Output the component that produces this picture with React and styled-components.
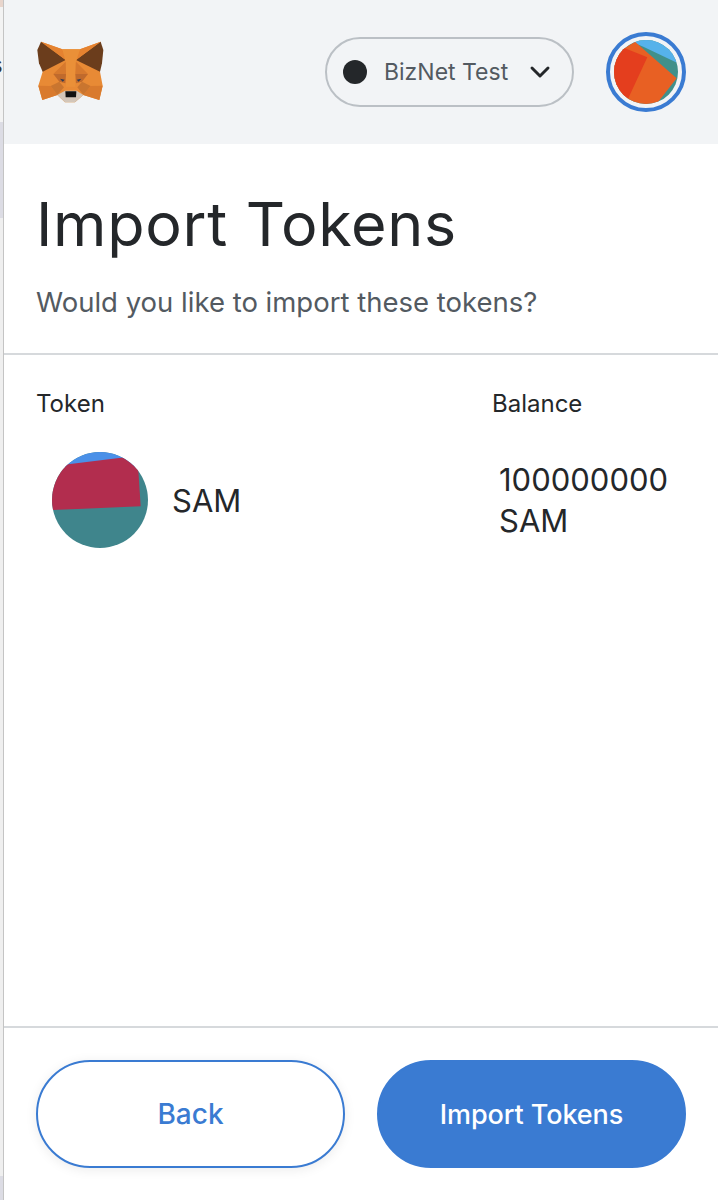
import styled, { createGlobalStyle } from 'styled-components';
import { ChevronDown } from 'lucide-react';

const GlobalStyle = createGlobalStyle`
  html,
  body {
    margin: 0;
    padding: 0;
    background: #fff;
    overflow: hidden;
  }

  * {
    box-sizing: border-box;
  }
`;

const StyledPage = styled.div`
  width: 718px;
  height: 1200px;

  display: flex;

  font-family: 'Inter', 'Liberation Sans', sans-serif;
  color: #24272a;
`;

const StyledSliver = styled.div`
  position: relative;
  flex: 0 0 4px;

  overflow: hidden;

  border-right: 1px solid #c4c4c4;
  background: linear-gradient(
    #e8d5cc 0 7px,
    #f3f3f3 7px 122px,
    #dcdce4 122px 218px,
    #efefef 218px 1176px,
    #dcdce4 1176px
  );
`;

const StyledStray = styled.span`
  position: absolute;
  top: 50px;
  left: -10px;

  font-size: 24px;
  color: #333;
`;

const StyledPopup = styled.main`
  flex: 1;
  min-width: 0;

  display: flex;
  flex-direction: column;
`;

const StyledHeader = styled.header`
  height: 144px;
  padding: 0 32px 0 33px;

  display: flex;
  align-items: center;

  background: #f2f4f6;
`;

const StyledFox = styled.svg`
  width: 67px;
  height: 62px;
  margin-right: auto;
`;

const StyledNetwork = styled.div`
  width: 249px;
  height: 70px;
  margin-right: 32px;
  padding: 0 16px 0 16px;

  display: flex;
  align-items: center;

  border: 2px solid #bbc0c5;
  border-radius: 35px;

  font-size: 23px;
  color: #535a61;
`;

const StyledDot = styled.span`
  flex: 0 0 24px;
  height: 24px;
  margin-right: 17px;

  border-radius: 50%;
  background: #24272a;
`;

const StyledNetworkName = styled.span`
  flex: 1;
  white-space: nowrap;
`;

const StyledAccount = styled.div`
  width: 80px;
  height: 80px;

  display: flex;
  align-items: center;
  justify-content: center;

  border: 4px solid #3a7bd2;
  border-radius: 50%;
`;

const StyledAvatar = styled.svg`
  width: ${(props) => props.$size}px;
  height: ${(props) => props.$size}px;
  flex-shrink: 0;

  border-radius: 50%;
`;

const StyledIntro = styled.section`
  height: 211px;
  padding: 44px 32px 0;

  border-bottom: 2px solid #d6d9dc;
`;

const StyledTitle = styled.h1`
  margin: 0;

  font-size: 61px;
  font-weight: 400;
  line-height: 72px;
  letter-spacing: 0.7px;
`;

const StyledSubtitle = styled.p`
  margin: 24px 0 0;

  font-size: 27.5px;
  line-height: 36px;
  color: #535a61;
`;

const StyledTable = styled.section`
  flex: 1;
  padding: 32px 32px 0;

  display: grid;
  grid-template-columns: 456px 1fr;
  grid-template-rows: 34px auto;
  row-gap: 31px;
  align-content: start;
`;

const StyledColumnLabel = styled.div`
  font-size: 24px;
  line-height: 34px;
`;

const StyledTokenCell = styled.div`
  padding-left: 16px;

  display: flex;
  align-items: center;
  gap: 24px;

  font-size: 31px;
`;

const StyledBalance = styled.div`
  padding: 7px 0 0 7px;

  font-size: 31px;
  line-height: 41px;
`;

const StyledFooter = styled.footer`
  height: 174px;
  padding: 32px;

  display: flex;
  gap: 32px;

  border-top: 2px solid #d6d9dc;
`;

const StyledButton = styled.button`
  flex: 1;
  height: 108px;
  padding: 0;

  border: 2px solid #3a7bd2;
  border-radius: 54px;

  font-family: inherit;
  font-size: ${(props) => (props.$primary ? '27px' : '28px')};
  font-weight: 500;
  letter-spacing: ${(props) => (props.$primary ? '-0.1px' : '0')};
  color: ${(props) => (props.$primary ? '#fff' : '#3a7bd2')};

  background: ${(props) => (props.$primary ? '#3a7bd2' : '#fff')};
  box-shadow: ${(props) =>
    props.$primary ? 'none' : '0 2px 12px rgba(0, 0, 0, 0.08)'};
`;

function Fox() {
  return (
    <StyledFox viewBox='111 123 201 186'>
      <polygon
        fill='#e88a35'
        points='123,125 187,148 240,148 302,125 300,215 308,257 298,300 250,285 225,307 195,307 172,285 127,300 115,257 128,215'
      />
      <polygon fill='#6b3d1c' points='123,125 197,180 128,215 117,190 112,150' />
      <polygon fill='#6b3d1c' points='302,125 228,180 300,215 306,190 310,150' />
      <polygon fill='#e58230' points='123,125 187,148 197,180' />
      <polygon fill='#e58230' points='302,125 240,148 228,180' />
      <polygon fill='#ea9038' points='187,148 240,148 226,190 226,260 198,260 198,190' />
      <polygon fill='#d6792e' points='197,185 198,222 160,222' />
      <polygon fill='#d6792e' points='228,185 226,222 264,222' />
      <polygon fill='#c06a2c' points='160,222 198,222 196,250 178,245' />
      <polygon fill='#c06a2c' points='264,222 226,222 228,250 246,245' />
      <polygon fill='#d97a2d' points='115,257 152,258 172,285 127,300' />
      <polygon fill='#d97a2d' points='308,257 272,258 250,285 298,300' />
      <polygon fill='#c9752f' points='152,258 178,245 192,262 172,285' />
      <polygon fill='#c9752f' points='272,258 246,245 232,262 250,285' />
      <polygon fill='#2d3a55' points='180,236 194,239 188,245' />
      <polygon fill='#2d3a55' points='244,236 230,239 236,245' />
      <polygon fill='#d3c6b9' points='172,285 195,272 230,272 250,285 225,307 195,307' />
      <polygon fill='#111' points='196,274 229,274 228,292 197,292' />
    </StyledFox>
  );
}

function AccountAvatar() {
  return (
    <StyledAvatar $size={64} viewBox='912 60 192 192'>
      <rect x='912' y='60' width='192' height='192' fill='#41908a' />
      <polygon fill='#56b2ea' points='965,65 1020,50 1110,50 1105,130 1000,80' />
      <polygon fill='#e86023' points='950,80 975,65 1100,175 1045,245 1000,260 900,260 900,100' />
      <polygon fill='#e43e1e' points='945,85 1012,112 955,235 900,235 900,100' />
    </StyledAvatar>
  );
}

function TokenAvatar() {
  return (
    <StyledAvatar $size={96} viewBox='156 215 288 288'>
      <rect x='156' y='215' width='288' height='288' fill='#3f858c' />
      <rect x='156' y='215' width='288' height='45' fill='#4a90e8' />
      <polygon fill='#b22d4e' points='140,260 412,226 422,378 140,390' />
    </StyledAvatar>
  );
}

function App() {
  return (
    <StyledPage>
      <GlobalStyle />
      <StyledSliver>
        <StyledStray>s</StyledStray>
      </StyledSliver>
      <StyledPopup>
        <StyledHeader>
          <Fox />
          <StyledNetwork>
            <StyledDot />
            <StyledNetworkName>BizNet Test</StyledNetworkName>
            <ChevronDown size={32} color='#24272a' strokeWidth={2.2} />
          </StyledNetwork>
          <StyledAccount>
            <AccountAvatar />
          </StyledAccount>
        </StyledHeader>

        <StyledIntro>
          <StyledTitle>Import Tokens</StyledTitle>
          <StyledSubtitle>Would you like to import these tokens?</StyledSubtitle>
        </StyledIntro>

        <StyledTable>
          <StyledColumnLabel>Token</StyledColumnLabel>
          <StyledColumnLabel>Balance</StyledColumnLabel>
          <StyledTokenCell>
            <TokenAvatar />
            SAM
          </StyledTokenCell>
          <StyledBalance>
            100000000
            <br />
            SAM
          </StyledBalance>
        </StyledTable>

        <StyledFooter>
          <StyledButton>Back</StyledButton>
          <StyledButton $primary>Import Tokens</StyledButton>
        </StyledFooter>
      </StyledPopup>
    </StyledPage>
  );
}

export default App;
